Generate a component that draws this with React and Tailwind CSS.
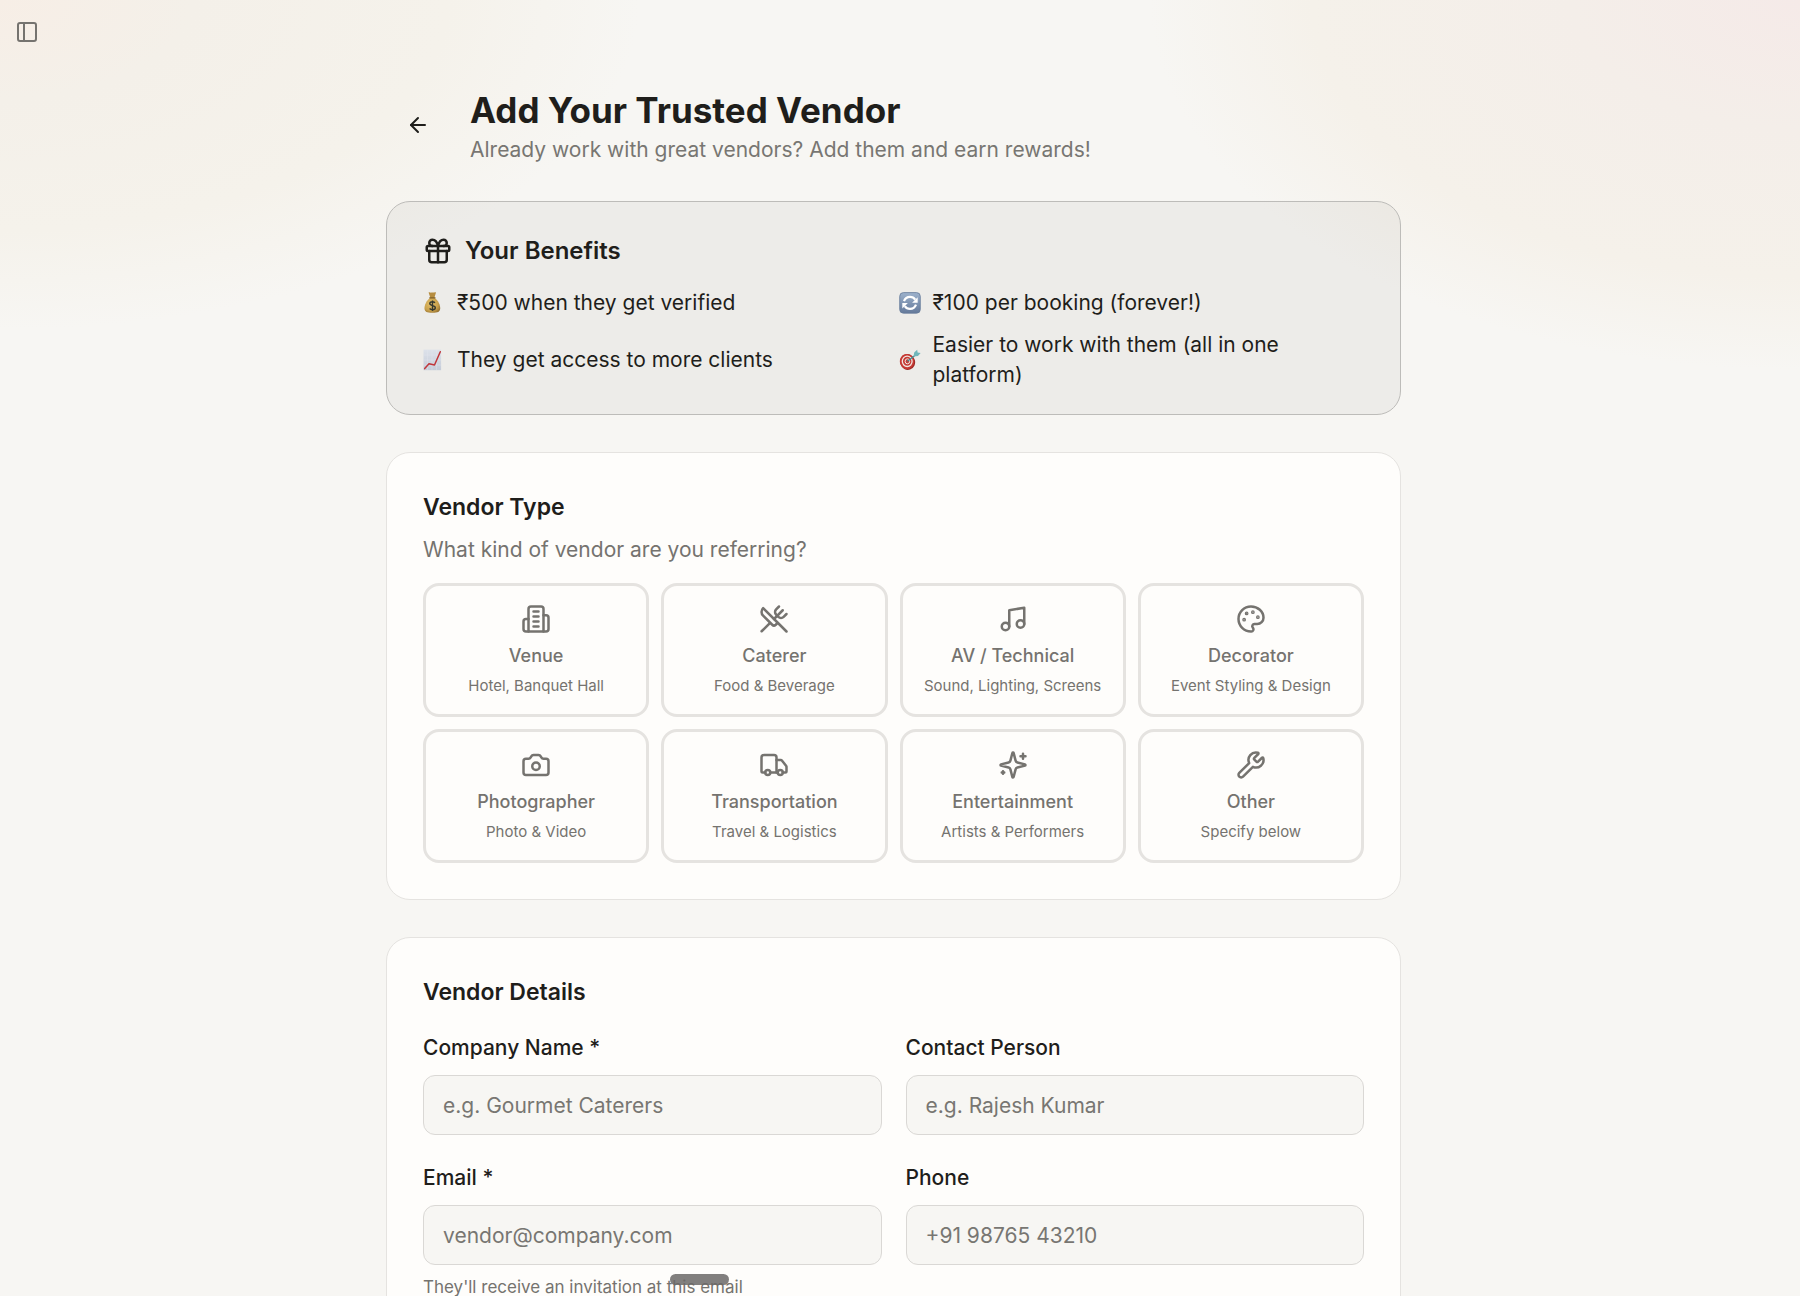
import { useState } from 'react'
import { ArrowLeft, Camera, Gift, Music, Palette, PanelLeft, Truck, UtensilsCrossed, Wrench } from 'lucide-react'

const strokeProps = {
  viewBox: '0 0 24 24',
  fill: 'none',
  stroke: 'currentColor',
  strokeWidth: 2,
  strokeLinecap: 'round',
  strokeLinejoin: 'round',
  'aria-hidden': true
}

const BuildingIcon = ({ className }) => (
  <svg {...strokeProps} className={className}>
    <path d="M6 22V4a2 2 0 0 1 2-2h8a2 2 0 0 1 2 2v18Z" />
    <path d="M6 12H4a2 2 0 0 0-2 2v6a2 2 0 0 0 2 2h2" />
    <path d="M18 9h2a2 2 0 0 1 2 2v9a2 2 0 0 1-2 2h-2" />
    <path d="M10 6h4M10 10h4M10 14h4M10 18h4" />
  </svg>
)

const SparklesIcon = ({ className }) => (
  <svg {...strokeProps} className={className}>
    <path d="M9.937 15.5A2 2 0 0 0 8.5 14.063l-6.135-1.582a.5.5 0 0 1 0-.962L8.5 9.936A2 2 0 0 0 9.937 8.5l1.582-6.135a.5.5 0 0 1 .963 0L14.063 8.5A2 2 0 0 0 15.5 9.937l6.135 1.581a.5.5 0 0 1 0 .964L15.5 14.063a2 2 0 0 0-1.437 1.437l-1.582 6.135a.5.5 0 0 1-.963 0z" />
    <path d="M20 3v4M22 5h-4M4 17v2M5 18H3" />
  </svg>
)

const MoneyBag = () => (
  <svg viewBox="0 0 24 24" className="size-6 shrink-0" role="img" aria-label="Money bag">
    <defs>
      <radialGradient id="bag" cx="0.4" cy="0.4" r="0.7">
        <stop offset="0" stopColor="#e3bf69" />
        <stop offset="0.65" stopColor="#c9a14c" />
        <stop offset="1" stopColor="#94702f" />
      </radialGradient>
    </defs>
    <path d="M5.6 1.4c1.3-.5 1.8.6 2.9.2 1-.6 1.8.4 2.8-.2.8-.3 1.4-.2 1.7.2L11.3 7H7.4Z" fill="#b68d40" />
    <path d="M7.3 6.8h4.1c3.6 2.6 6 7 5.800 10.800-.2 3.400-2.400 4.200-7.900 4.200S1.700 21 1.500 17.600c-.2-3.800 2.200-8.200 5.800-10.800Z" fill="url(#bag)" />
    <path d="M6.8 6.800h5.200" stroke="#7e5f29" strokeWidth="1.3" strokeLinecap="round" />
    <path d="M12 11.8c-.8-.8-1.600-1.100-2.600-1.100-1.500 0-2.600.7-2.600 1.900 0 2.700 5.500 1.300 5.500 4.100 0 1.200-1.200 2-2.800 2-1.200 0-2.200-.4-2.900-1.200M9.500 9.400v10.600" fill="none" stroke="#35382f" strokeWidth="1.4" />
  </svg>
)

const RefreshTile = () => (
  <svg viewBox="0 0 24 24" className="size-6 shrink-0" role="img" aria-label="Recurring">
    <defs>
      <linearGradient id="tile" x1="0" y1="0" x2="0" y2="1">
        <stop offset="0" stopColor="#9db2cc" />
        <stop offset="1" stopColor="#64799a" />
      </linearGradient>
    </defs>
    <rect x="0.7" y="1.6" width="20.6" height="20.6" rx="3.8" fill="url(#tile)" stroke="#667b99" strokeWidth="0.8" />
    <path d="M5 10.200C6.200 7 8.500 5.900 11 5.900c2.300 0 4 .9 5.200 2.700" fill="none" stroke="#fff" strokeWidth="2.2" />
    <path d="M18.700 6.200v5.600h-5.600Z" fill="#fff" />
    <path d="M17 13.600c-1.200 3.200-3.500 4.300-6 4.300-2.300 0-4-.9-5.200-2.700" fill="none" stroke="#fff" strokeWidth="2.2" />
    <path d="M3.300 17.600V12h5.600Z" fill="#fff" />
  </svg>
)

const ChartUp = () => (
  <svg viewBox="0 0 24 24" className="size-6 shrink-0" role="img" aria-label="Growth">
    <defs>
      <linearGradient id="sheet" x1="0" y1="0" x2="0" y2="1">
        <stop offset="0" stopColor="#dde2ea" />
        <stop offset="1" stopColor="#c5ccd8" />
      </linearGradient>
    </defs>
    <rect x="0.5" y="1.6" width="17.6" height="20.6" fill="url(#sheet)" />
    <path d="M4.500 2v20M9 2v20M13.500 2v20M1 7h17M1 12h17M1 17h17" stroke="#e2e6ed" strokeWidth="0.4" />
    <path d="M1.700 20.600 6 15.800l5.500 1.200L17.300 3.800" fill="none" stroke="#c0363a" strokeWidth="1.5" strokeLinejoin="round" strokeLinecap="round" />
  </svg>
)

const Target = () => (
  <svg viewBox="0 0 24 24" className="size-6 shrink-0" role="img" aria-label="Target">
    <ellipse cx="8.6" cy="14" rx="7.5" ry="8" transform="rotate(-18 8.6 14)" fill="#9f2a26" />
    <ellipse cx="8" cy="13.5" rx="7.1" ry="7.6" transform="rotate(-18 8 13.5)" fill="#c63a34" />
    <ellipse cx="8.2" cy="13.3" rx="4.9" ry="5.2" fill="none" stroke="#f1e7e2" strokeWidth="1.3" />
    <ellipse cx="8.4" cy="13.3" rx="2.3" ry="2.5" fill="#c63a34" stroke="#f1e7e2" strokeWidth="1" />
    <path d="m8.800 13 8-6.300" stroke="#3e8f95" strokeWidth="1.2" strokeLinecap="round" />
    <path d="m14.600 8.400.6-4 3-2.600.4 2.800 3 .5-2.600 3Z" fill="#6fb6ba" />
  </svg>
)

const benefits = [
  { id: 'verified', icon: MoneyBag, text: '₹500 when they get verified' },
  { id: 'booking', icon: RefreshTile, text: '₹100 per booking (forever!)' },
  { id: 'clients', icon: ChartUp, text: 'They get access to more clients' },
  { id: 'platform', icon: Target, text: 'Easier to work with them (all in one platform)' }
]

const vendorTypes = [
  { id: 'venue', label: 'Venue', hint: 'Hotel, Banquet Hall', icon: BuildingIcon },
  { id: 'caterer', label: 'Caterer', hint: 'Food & Beverage', icon: UtensilsCrossed },
  { id: 'av', label: 'AV / Technical', hint: 'Sound, Lighting, Screens', icon: Music },
  { id: 'decorator', label: 'Decorator', hint: 'Event Styling & Design', icon: Palette },
  { id: 'photographer', label: 'Photographer', hint: 'Photo & Video', icon: Camera },
  { id: 'transportation', label: 'Transportation', hint: 'Travel & Logistics', icon: Truck },
  { id: 'entertainment', label: 'Entertainment', hint: 'Artists & Performers', icon: SparklesIcon },
  { id: 'other', label: 'Other', hint: 'Specify below', icon: Wrench }
]

const fields = [
  { id: 'company', label: 'Company Name *', placeholder: 'e.g. Gourmet Caterers', type: 'text' },
  { id: 'contact', label: 'Contact Person', placeholder: 'e.g. Rajesh Kumar', type: 'text' },
  {
    id: 'email',
    label: 'Email *',
    placeholder: 'vendor@company.com',
    type: 'email',
    note: "They'll receive an invitation at this email"
  },
  { id: 'phone', label: 'Phone', placeholder: '+91 98765 43210', type: 'tel' }
]

const Card = ({ title, children }) => (
  <section className="mt-[37px] rounded-3xl border border-[#e5e3e0] bg-[#fefdfb] p-9">
    <h2 className="text-[23px] leading-9 font-semibold">{title}</h2>
    {children}
  </section>
)

const Field = ({ id, label, placeholder, type, note }) => (
  <div>
    <label htmlFor={id} className="block text-[21px] leading-[30px] font-medium">
      {label}
    </label>
    <input
      id={id}
      type={type}
      placeholder={placeholder}
      className="mt-3 block h-[60px] w-full rounded-xl border border-[#dad8d5] bg-[#f7f6f3] px-[19px] text-[21px] outline-none placeholder:text-[#787672] focus:border-[#8a8884]"
    />
    {note && <p className="mt-2.5 text-[17px] leading-6 text-[#75736f]">{note}</p>}
  </div>
)

export default function App() {
  const [vendorType, setVendorType] = useState(null)

  return (
    <div className="relative h-screen overflow-y-auto bg-[#f7f6f3] bg-[radial-gradient(ellipse_640px_330px_at_0_0,#f7eee6,#f4f0e9_30%,#f5f2eb_70%,transparent),radial-gradient(ellipse_650px_370px_at_100%_0,#f5eae8,#f4eee9_35%,#f5f1ea_75%,transparent)] pr-[13px] font-['Inter',sans-serif] text-[#1f1e1b] [scrollbar-width:none]">
      <button type="button" aria-label="Toggle sidebar" className="absolute top-3 left-[7px] p-2 text-[#75736f]">
        <PanelLeft className="size-6" />
      </button>

      <main className="mx-auto max-w-[1015px] pt-[88px] pb-20">
        <header className="flex items-center gap-5">
          <button type="button" aria-label="Back" className="px-5 pt-4 pb-5">
            <ArrowLeft className="size-6" />
          </button>
          <div>
            <h1 className="text-[35px] leading-[44px] font-bold">Add Your Trusted Vendor</h1>
            <p className="mt-[3px] text-[21px] leading-[30px] text-[#787672]">
              Already work with great vendors? Add them and earn rewards!
            </p>
          </div>
        </header>

        {/* Benefits */}
        <section className="mt-9 rounded-3xl border border-[#bdbcb9] bg-black/4 px-9 pt-[33px] pb-6">
          <h2 className="flex items-center gap-3 text-[24px] leading-8 font-semibold">
            <Gift className="size-[30px]" />
            Your Benefits
          </h2>
          <ul className="mt-[21px] grid grid-cols-1 gap-x-2.5 gap-y-3 md:grid-cols-2">
            {benefits.map(({ id, icon: Icon, text }) => (
              <li key={id} className="flex items-center gap-2.5 text-[21px] leading-[30px]">
                <Icon />
                <span>{text}</span>
              </li>
            ))}
          </ul>
        </section>

        <Card title="Vendor Type">
          <p className="mt-2.5 text-[21px] leading-[30px] text-[#75736f]">What kind of vendor are you referring?</p>
          <div className="mt-[18px] grid grid-cols-2 gap-3 md:grid-cols-4">
            {vendorTypes.map(({ id, label, hint, icon: Icon }) => (
              <button
                key={id}
                type="button"
                aria-pressed={vendorType === id}
                onClick={() => setVendorType(id)}
                className={`flex flex-col items-center rounded-2xl border-3 py-[18px] text-[#75736f] ${
                  vendorType === id ? 'border-[#1f1e1b]' : 'border-[#e5e3e0]'
                }`}
              >
                <Icon className="size-[30px]" />
                <span className="mt-2.5 text-[18px] leading-6 font-medium">{label}</span>
                <span className="mt-2 text-[15px] leading-5">{hint}</span>
              </button>
            ))}
          </div>
        </Card>

        <Card title="Vendor Details">
          <div className="mt-[23px] grid grid-cols-1 gap-x-6 gap-y-7 md:grid-cols-2">
            {fields.map(field => (
              <Field key={field.id} {...field} />
            ))}
          </div>
        </Card>
      </main>

      {/* Drag handle */}
      <div className="fixed bottom-[11px] left-[670px] h-[11px] w-[59px] rounded-full bg-[#6b6967]/85" />
    </div>
  )
}
